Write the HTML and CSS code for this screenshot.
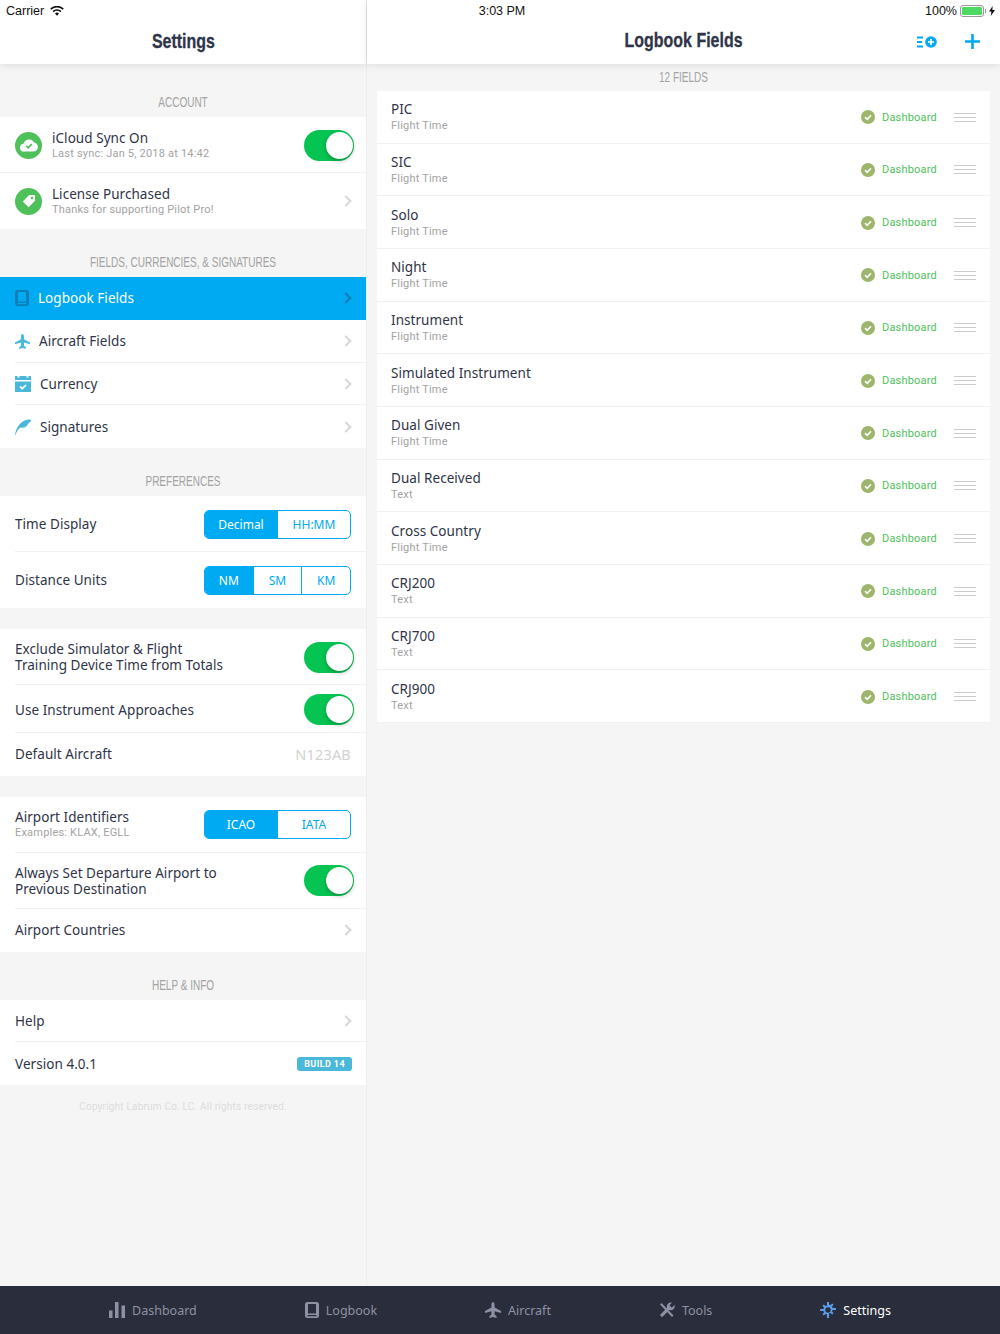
FILE: index.html
```html
<!DOCTYPE html>
<html lang="en">
<head>
    <meta charset="UTF-8">
    <meta name="viewport" content="width=device-width, initial-scale=1.0">
    <title>Settings</title>
    <link rel="stylesheet" href="styles.css">
</head>
<body>
    <div class="status-bar">
        <div class="status-left">
            <span>Carrier</span>
            <svg width="14" height="10" viewBox="0 0 15 11"><path d="M7.500 10.600 5.300 8.200a3.200 3.200 0 0 1 4.400 0zM3.900 6.800 2.600 5.400a7.200 7.200 0 0 1 9.800 0l-1.300 1.400a5.200 5.200 0 0 0-7.200 0zM1.300 4 0 2.700a11 11 0 0 1 15 0L13.700 4a9.200 9.200 0 0 0-12.400 0z" fill="#111"/></svg>
        </div>
        <div class="status-time">3:03 PM</div>
        <div class="status-right">
            <span>100%</span>
            <span class="battery"><span class="battery-fill"></span></span>
            <span class="battery-tip"></span>
            <svg width="6" height="10" viewBox="0 0 6 10"><path d="M3.600 0 0 5.600h2.400L1.800 10 6 3.900H3.400z" fill="#111"/></svg>
        </div>
    </div>

    <div class="panes">
        <!-- Settings column -->
        <div class="master">
            <div class="nav-bar"><h1>Settings</h1></div>

            <h2 class="section-title first">ACCOUNT</h2>
            <div class="group">
                <div class="row row-56 full-line">
                    <span class="round-icon">
                        <svg width="18" height="14" viewBox="0 0 18 14"><path d="M4.200 13.500a3.900 3.900 0 0 1-.6-7.800A5.600 5.600 0 0 1 14 4.600a4.500 4.500 0 0 1 0 8.900z" fill="#fff"/><path d="m6.200 7.800 2 2 3.600-3.600" fill="none" stroke="#4fc15a" stroke-width="1.700"/></svg>
                    </span>
                    <div class="label-stack">
                        <div class="label">iCloud Sync On</div>
                        <div class="sub">Last sync: Jan 5, 2018 at 14:42</div>
                    </div>
                    <span class="switch"></span>
                </div>
                <div class="row row-56 no-border">
                    <span class="round-icon">
                        <svg width="14" height="14" viewBox="0 0 14 14"><path d="M7.200 1H13v5.800l-6.400 6.400L.8 7.400z" fill="#fff"/><circle cx="10" cy="4" r="1.300" fill="#4fc15a"/></svg>
                    </span>
                    <div class="label-stack">
                        <div class="label">License Purchased</div>
                        <div class="sub">Thanks for supporting Pilot Pro!</div>
                    </div>
                    <span class="chevron"></span>
                </div>
            </div>

            <h2 class="section-title">FIELDS, CURRENCIES, &amp; SIGNATURES</h2>
            <div class="group">
                <div class="row row-43 selected no-border">
                    <svg class="list-icon" width="14" height="16" viewBox="0 0 14 16"><path d="M2.500 0h9A2.500 2.500 0 0 1 14 2.500v11a2.500 2.500 0 0 1-2.500 2.500h-9A2.500 2.500 0 0 1 0 13.500v-11A2.500 2.500 0 0 1 2.500 0zM3 2v9.500h8V2zM2.500 13v1.300h9V13z" fill="#0b7fb8" fill-rule="evenodd"/></svg>
                    <span class="label">Logbook Fields</span>
                    <span class="chevron"></span>
                </div>
                <div class="row row-43">
                    <svg class="list-icon" width="15" height="15" viewBox="0 0 15 15"><path d="M7.500 0c.9 0 1.500 1.300 1.500 3v2.200l6 3.300v1.700L9 8.600v3.200l1.800 1.500V15l-3.300-1-3.300 1v-1.700L6 11.800V8.600l-6 1.600V8.500l6-3.300V3c0-1.700.6-3 1.500-3z" fill="#4ab8d8"/></svg>
                    <span class="label">Aircraft Fields</span>
                    <span class="chevron"></span>
                </div>
                <div class="row row-43">
                    <svg class="list-icon" width="16" height="16" viewBox="0 0 16 16"><path d="M0 0h2.500v1.500h2V0h7v1.500h2V0H16v4H0zM0 5.500h16V16H0z" fill="#4ab8d8"/><path d="m5 10.500 2.200 2.200L11 9" fill="none" stroke="#fff" stroke-width="1.700"/></svg>
                    <span class="label">Currency</span>
                    <span class="chevron"></span>
                </div>
                <div class="row row-43 no-border">
                    <svg class="list-icon" width="16" height="16" viewBox="0 0 16 16"><path d="M0 16C1 9 5 2 13 .5c2-.4 3 .4 3 1 0 2-2 1.500-3 3.500-1 2.500-4 4.500-7.500 3.500C3.500 10 1.500 12.500.5 16z" fill="#4ab8d8"/></svg>
                    <span class="label">Signatures</span>
                    <span class="chevron"></span>
                </div>
            </div>

            <h2 class="section-title">PREFERENCES</h2>
            <div class="group">
                <div class="row row-56">
                    <span class="label">Time Display</span>
                    <div class="segmented seg-two">
                        <span class="seg active">Decimal</span>
                        <span class="seg">HH:MM</span>
                    </div>
                </div>
                <div class="row row-56 no-border">
                    <span class="label">Distance Units</span>
                    <div class="segmented seg-three">
                        <span class="seg active">NM</span>
                        <span class="seg">SM</span>
                        <span class="seg">KM</span>
                    </div>
                </div>
            </div>

            <div class="group spaced">
                <div class="row row-56">
                    <span class="label">Exclude Simulator &amp; Flight<br>Training Device Time from Totals</span>
                    <span class="switch"></span>
                </div>
                <div class="row row-48">
                    <span class="label">Use Instrument Approaches</span>
                    <span class="switch"></span>
                </div>
                <div class="row row-43 no-border">
                    <span class="label">Default Aircraft</span>
                    <span class="value">N123AB</span>
                </div>
            </div>

            <div class="group spaced">
                <div class="row row-56">
                    <div class="label-stack tight">
                        <div class="label">Airport Identifiers</div>
                        <div class="sub">Examples: KLAX, EGLL</div>
                    </div>
                    <div class="segmented seg-two">
                        <span class="seg active">ICAO</span>
                        <span class="seg">IATA</span>
                    </div>
                </div>
                <div class="row row-56">
                    <span class="label">Always Set Departure Airport to<br>Previous Destination</span>
                    <span class="switch"></span>
                </div>
                <div class="row row-43 no-border">
                    <span class="label">Airport Countries</span>
                    <span class="chevron"></span>
                </div>
            </div>

            <h2 class="section-title">HELP &amp; INFO</h2>
            <div class="group">
                <div class="row row-43">
                    <span class="label">Help</span>
                    <span class="chevron"></span>
                </div>
                <div class="row row-43 no-border">
                    <span class="label">Version 4.0.1</span>
                    <span class="badge">BUILD 14</span>
                </div>
            </div>

            <p class="copyright">Copyright Labrum Co. LC. All rights reserved.</p>
        </div>

        <!-- Logbook fields column -->
        <div class="detail">
            <div class="nav-bar">
                <h1>Logbook Fields</h1>
                <div class="nav-actions">
                    <svg width="20" height="12" viewBox="0 0 20 12"><path d="M0 .5h6v2H0zM0 5h5v2H0zM0 9.500h6v2H0z" fill="#00a9f0"/><circle cx="14" cy="6" r="5.800" fill="#00a9f0"/><path d="M14 3v6M11 6h6" stroke="#fff" stroke-width="1.700"/></svg>
                    <svg width="15" height="15" viewBox="0 0 15 15"><path d="M7.500 0v15M0 7.500h15" stroke="#00a9f0" stroke-width="2.600"/></svg>
                </div>
            </div>
            <h2 class="count-title">12 FIELDS</h2>
            <div id="fields" class="field-list"></div>
        </div>
    </div>

    <div class="tab-bar">
        <div class="tab">
            <svg width="16" height="16" viewBox="0 0 16 16"><path d="M0 8.500h3.500V16H0zM6 0h3.500v16H6zM12.500 3.500H16V16h-3.500z" fill="#8d91a3"/></svg>
            <span>Dashboard</span>
        </div>
        <div class="tab">
            <svg width="14" height="16" viewBox="0 0 14 16"><path d="M2.500 0h9A2.500 2.500 0 0 1 14 2.500v11a2.500 2.500 0 0 1-2.500 2.500h-9A2.500 2.500 0 0 1 0 13.500v-11A2.500 2.500 0 0 1 2.500 0zM3 2v9.500h8V2zM2.500 13v1.300h9V13z" fill="#8d91a3" fill-rule="evenodd"/></svg>
            <span>Logbook</span>
        </div>
        <div class="tab">
            <svg width="16" height="16" viewBox="0 0 15 15"><path d="M7.500 0c.9 0 1.500 1.300 1.500 3v2.200l6 3.300v1.700L9 8.600v3.200l1.800 1.500V15l-3.300-1-3.300 1v-1.700L6 11.800V8.600l-6 1.600V8.500l6-3.300V3c0-1.700.6-3 1.500-3z" fill="#8d91a3"/></svg>
            <span>Aircraft</span>
        </div>
        <div class="tab">
            <svg width="16" height="16" viewBox="0 0 16 16"><path d="m1 2.500 1.500-1.500 12 12.500-1.500 1.500z" fill="#8d91a3"/><path d="M15.500 3 12.800 5.700 10.500 3.300 13 .7A4 4 0 0 0 8 5.800L1 13l2 2.200 7.300-7.200a4 4 0 0 0 5.200-5z" fill="#8d91a3"/></svg>
            <span>Tools</span>
        </div>
        <div class="tab current">
            <svg width="16" height="16" viewBox="0 0 16 16"><path d="M7 0h2v2.400l1.500.6L12.200 1.400l1.400 1.400L12 4.500l.6 1.500H16v2h-3.400l-.6 1.500 1.600 1.700-1.400 1.400-1.700-1.600-1.500.6V16H7v-3.400l-1.500-.6-1.700 1.600-1.400-1.400L4 10.500 3.400 9H0V7h3.400L4 5.500 2.400 3.800l1.400-1.400L5.500 4 7 3.400z" fill="#5b9bea"/><circle cx="8" cy="8" r="2.700" fill="#2a2d3b"/></svg>
            <span>Settings</span>
        </div>
    </div>

    <script>
        const fields = [
            ['PIC', 'Flight Time'], ['SIC', 'Flight Time'], ['Solo', 'Flight Time'],
            ['Night', 'Flight Time'], ['Instrument', 'Flight Time'],
            ['Simulated Instrument', 'Flight Time'], ['Dual Given', 'Flight Time'],
            ['Dual Received', 'Text'], ['Cross Country', 'Flight Time'],
            ['CRJ200', 'Text'], ['CRJ700', 'Text'], ['CRJ900', 'Text']
        ];

        const list = document.getElementById('fields');

        fields.forEach(field => {
            const row = document.createElement('div');
            row.className = 'field-row';
            row.innerHTML = `
                <div class="label-stack">
                    <div class="label">${field[0]}</div>
                    <div class="sub">${field[1]}</div>
                </div>
                <svg class="check" width="14" height="14" viewBox="0 0 14 14"><circle cx="7" cy="7" r="7" fill="#9db56c"/><path d="m4 7.200 2.200 2.100L10 5.300" fill="none" stroke="#fff" stroke-width="1.600"/></svg>
                <span class="field-tag">Dashboard</span>
                <span class="grip"></span>`;
            list.appendChild(row);
        });
    </script>
</body>
</html>
```

FILE: styles.css
```css
/* Basic Reset */
* {
    margin: 0;
    padding: 0;
    box-sizing: border-box;
}

body {
    font-family: 'Noto Sans', sans-serif;
    background-color: #f5f5f5;
    color: #2f3448;
    width: 1000px;
    height: 1334px;
    overflow: hidden;
    display: flex;
    flex-direction: column;
    position: relative;
}

/* Status Bar */
.status-bar {
    position: absolute;
    top: 0;
    left: 0;
    right: 0;
    height: 20px;
    z-index: 2;
    display: flex;
    align-items: center;
    justify-content: space-between;
    padding: 1px 5px 0 6px;
    font-family: 'Liberation Sans', sans-serif;
    font-size: 12.5px;
    color: #111;
}

.status-left, .status-right {
    display: flex;
    align-items: center;
    width: 200px;
}

.status-left svg {
    margin-left: 6px;
}

.status-right {
    justify-content: flex-end;
}

.status-time {
    margin-left: 3px;
}

.battery {
    width: 24px;
    height: 12px;
    margin-left: 3px;
    padding: 1px;
    border: 1px solid #999;
    border-radius: 3px;
    display: block;
}

.battery-fill {
    display: block;
    height: 100%;
    background-color: #4cd964;
    border-radius: 1px;
}

.battery-tip {
    width: 1px;
    height: 4px;
    margin: 0 3px 0 1px;
    background-color: #999;
}

/* Panes */
.panes {
    flex: 1;
    display: flex;
    min-height: 0;
}

.master {
    width: 367px;
    border-right: 1px solid #eeeeee;
}

.detail {
    flex: 1;
}

.nav-bar {
    height: 64px;
    padding-top: 20px;
    background-color: #fff;
    box-shadow: 0 1px 8px rgba(0, 0, 0, 0.1);
    display: flex;
    align-items: center;
    justify-content: center;
    position: relative;
}

/* no narrow family is installed, so the condensed headings are squeezed */
.nav-bar h1 {
    font-family: 'Liberation Sans', sans-serif;
    font-size: 21px;
    font-weight: bold;
    color: #2f3448;
    margin-top: -2px;
    transform: scaleX(0.76);
    -webkit-text-stroke: 0.3px #2f3448;
}

.detail .nav-bar h1 {
    margin-top: -4px;
}

.nav-actions {
    position: absolute;
    right: 20px;
    top: 34px;
    display: flex;
    align-items: center;
    gap: 28px;
}

/* Section Titles */
.section-title, .count-title {
    font-family: 'Liberation Sans', sans-serif;
    font-size: 14.5px;
    font-weight: normal;
    color: #a3a3a3;
    text-align: center;
    line-height: 16px;
    transform: scaleX(0.69);
}

.section-title {
    height: 48px;
    padding-top: 25px;
}

.section-title.first {
    height: 53px;
    padding-top: 30px;
}

.count-title {
    height: 27px;
    padding-top: 5px;
}

/* Rows */
.group {
    background-color: #fff;
}

.group.spaced {
    margin-top: 21px;
}

.row {
    display: flex;
    align-items: center;
    padding: 0 15px;
    position: relative;
}

.row::after {
    content: "";
    position: absolute;
    left: 15px;
    right: 0;
    bottom: 0;
    height: 1px;
    background-color: #f1f1f1;
}

.row.full-line::after {
    left: 0;
}

.row.no-border::after {
    display: none;
}

.row-56 { height: 56px; }
.row-48 { height: 48px; padding-top: 1px; }
.row-43 { height: 42.75px; }

.label {
    font-size: 13.5px;
    line-height: 16px;
    letter-spacing: 0.05px;
    color: #2f3448;
}

.sub {
    font-family: 'Roboto', sans-serif;
    font-size: 11px;
    line-height: 14px;
    letter-spacing: 0.2px;
    margin-top: 1px;
    color: #a3a3a3;
}

.label-stack {
    flex: 1;
}

.round-icon {
    width: 27px;
    height: 27px;
    border-radius: 50%;
    background-color: #4fc15a;
    display: flex;
    align-items: center;
    justify-content: center;
    margin-right: 10px;
}

.list-icon {
    margin-right: 9px;
    flex-shrink: 0;
}

.row > .label {
    flex: 1;
}

.row.selected {
    background-color: #00aaf2;
}

.row.selected .label {
    color: #fff;
}

.row.selected .chevron {
    border-color: #0b7fb8;
}

.chevron {
    width: 8px;
    height: 8px;
    margin-right: 1px;
    border-top: 2px solid #d8d8d8;
    border-right: 2px solid #d8d8d8;
    transform: rotate(45deg);
    flex-shrink: 0;
}

.value {
    font-size: 14.5px;
    color: #d2d2d2;
    letter-spacing: 0.2px;
}

.badge {
    background-color: #4ab8d8;
    color: #fff;
    font-family: 'Roboto', sans-serif;
    font-size: 9px;
    font-weight: bold;
    letter-spacing: 0.4px;
    line-height: 14px;
    padding: 0 7px;
    border-radius: 3px;
    margin-right: -1px;
}

/* Switch */
.switch {
    width: 50px;
    height: 31px;
    margin-right: -3px;
    border-radius: 16px;
    background-color: #05c451;
    position: relative;
    flex-shrink: 0;
}

.switch::after {
    content: "";
    position: absolute;
    top: 2px;
    right: 1px;
    width: 27px;
    height: 27px;
    border-radius: 50%;
    background-color: #fff;
    box-shadow: 0 2px 4px rgba(0, 0, 0, 0.25);
}

/* Segmented Control */
.segmented {
    display: flex;
    height: 29px;
    width: 147px;
    border: 1px solid #00aaf2;
    border-radius: 5px;
    overflow: hidden;
}

.seg {
    display: flex;
    align-items: center;
    justify-content: center;
    font-size: 12px;
    color: #00aaf2;
    border-left: 1px solid #00aaf2;
}

.seg:first-child {
    border-left: none;
}

.seg.active {
    background-color: #00aaf2;
    color: #fff;
}

.seg-two .seg { flex: 1; }
.seg-two .seg.active { flex: none; width: 72px; }
.seg-three .seg { flex: 1; }

.copyright {
    font-family: 'Roboto', sans-serif;
    font-size: 10px;
    line-height: 12px;
    color: #dcdcdc;
    text-align: center;
    margin-top: 16px;
    letter-spacing: 0.2px;
}

/* Field List */
.field-list {
    margin: 0 10px;
    background-color: #fff;
}

.field-row {
    height: 52.67px;
    display: flex;
    align-items: center;
    padding: 1px 14px 0;
    border-bottom: 1px solid #f1f1f1;
}

.field-row .sub {
    margin-top: 2px;
}

.check {
    margin-right: 7px;
}

.field-tag {
    font-family: 'Roboto', sans-serif;
    font-size: 11px;
    color: #4fc15a;
    letter-spacing: 0.2px;
    width: 72px;
}

.grip {
    width: 22px;
    height: 9px;
    border-top: 1px solid #cbcbcb;
    border-bottom: 1px solid #cbcbcb;
    position: relative;
}

.grip::after {
    content: "";
    position: absolute;
    left: 0;
    right: 0;
    top: 3px;
    height: 1px;
    background-color: #cbcbcb;
}

/* Tab Bar */
.tab-bar {
    height: 48px;
    background-color: #2a2d3b;
    display: flex;
    justify-content: center;
    gap: 108px;
}

.tab {
    display: flex;
    align-items: center;
    gap: 7px;
    font-size: 12.5px;
    color: #8d91a3;
}

.tab.current {
    color: #fff;
}
```
